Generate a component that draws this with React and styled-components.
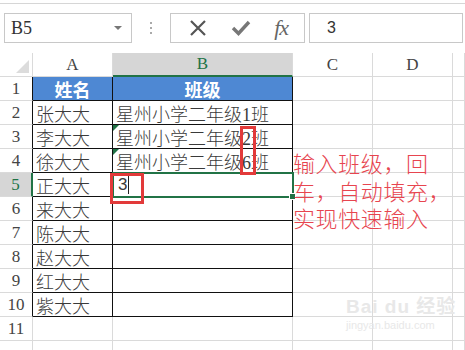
import React from "react";
import styled, { createGlobalStyle } from "styled-components";

const Global = createGlobalStyle`
  html, body { margin: 0; padding: 0; background: #fff; }
  body { width: 465px; height: 350px; overflow: hidden; }
`;

const SERIF = `"Liberation Serif", "Noto Sans CJK SC", serif`;
const SANS = `"Liberation Sans", "Noto Sans CJK SC", sans-serif`;
const GREEN = "#217346";
const GRID = "#dadada";

const Page = styled.div`
  width: 465px;
  height: 350px;
  overflow: hidden;
  padding-top: 3px;
  box-sizing: border-box;
`;

const FormulaBar = styled.div`
  display: flex;
  align-items: center;
  height: 50px;
  border-top: 1px solid #d6d6d6;
  padding: 9px 2px 10px 4px;
  box-sizing: border-box;
`;

const NameBox = styled.div`
  width: 128px;
  height: 30px;
  box-sizing: border-box;
  border: 1px solid #c8c8c8;
  display: flex;
  align-items: center;
  justify-content: space-between;
  padding: 0 9px 0 6px;
  font-family: ${SERIF};
  font-size: 18px;
  color: #333;
`;

const Caret = styled.span`
  width: 0;
  height: 0;
  border-left: 4px solid transparent;
  border-right: 4px solid transparent;
  border-top: 4px solid #777;
`;

const Dots = styled.div`
  width: 38px;
  display: flex;
  flex-direction: column;
  align-items: center;
  gap: 3px;
`;

const Dot = styled.span`
  width: 2px;
  height: 2px;
  background: #aaa;
`;

const FxBox = styled.div`
  width: 135px;
  height: 30px;
  box-sizing: border-box;
  border: 1px solid #c8c8c8;
  display: flex;
  align-items: center;
  justify-content: space-around;
  padding: 0 4px 0 6px;
`;

const Fx = styled.span`
  font-family: ${SERIF};
  font-style: italic;
  font-size: 22px;
  color: #666;
  letter-spacing: -1px;
`;

const FormulaInput = styled.div`
  flex: 1;
  margin-left: 4px;
  height: 30px;
  box-sizing: border-box;
  border: 1px solid #c8c8c8;
  display: flex;
  align-items: center;
  padding-left: 17px;
  font-family: ${SANS};
  font-size: 16px;
  color: #333;
`;

const Sheet = styled.div`
  position: relative;
  display: grid;
  grid-template-columns: 33px 80px 180px 80px 80px 1fr;
  grid-auto-rows: 24px;
`;

const Cell = styled.div`
  position: relative;
  box-sizing: border-box;
  border-right: 1px solid ${(p) => (p.$br ? "#111" : GRID)};
  border-bottom: 1px solid ${(p) => (p.$bb ? "#111" : GRID)};
  background: ${(p) => p.$bg || "#fff"};
  color: ${(p) => p.$color || "#3a3a3a"};
  font-family: ${SERIF};
  font-size: 18px;
  font-weight: ${(p) => (p.$bold ? 700 : 300)};
  display: flex;
  align-items: center;
  justify-content: ${(p) => (p.$center ? "center" : "flex-start")};
  padding-left: ${(p) => (p.$center ? 0 : 3)}px;
  white-space: nowrap;
  overflow: visible;
  &::before {
    content: "";
    display: ${(p) => (p.$tri ? "block" : "none")};
    position: absolute;
    left: 0;
    top: 0;
    border-top: 6px solid ${GREEN};
    border-right: 6px solid transparent;
  }
`;

const Head = styled.div`
  box-sizing: border-box;
  background: ${(p) => (p.$sel ? "#d6d6d6" : "#fff")};
  color: ${(p) => (p.$sel ? GREEN : "#444")};
  border-right: ${(p) => (p.$rsel ? `2px solid ${GREEN}` : `1px solid ${p.$rblack ? "#111" : GRID}`)};
  border-bottom: ${(p) => (p.$bsel ? `2px solid ${GREEN}` : `1px solid ${GRID}`)};
  font-family: ${SERIF};
  font-size: 17px;
  display: flex;
  align-items: center;
  justify-content: center;
`;

const Corner = styled(Head)`
  position: relative;
  &::after {
    content: "";
    position: absolute;
    right: 3px;
    bottom: 3px;
    border-bottom: 13px solid #dcdcdc;
    border-left: 13px solid transparent;
  }
`;

const Active = styled(Cell)`
  z-index: 2;
  outline: 2px solid ${GREEN};
  outline-offset: -1px;
  font-family: ${SANS};
  font-size: 17px;
  font-weight: 400;
  padding-left: 5px;
  &::after {
    content: "";
    position: absolute;
    right: -4px;
    bottom: -4px;
    width: 5px;
    height: 5px;
    background: ${GREEN};
    border: 1px solid #fff;
  }
`;

const Cursor = styled.span`
  width: 1px;
  height: 18px;
  background: #222;
  margin-left: 1px;
`;

const RedBox = styled.div`
  position: absolute;
  box-sizing: border-box;
  border: 3px solid #e23a3a;
  z-index: 3;
`;

const Note = styled.div`
  position: absolute;
  left: 293px;
  top: 96px;
  z-index: 3;
  font-family: "Noto Sans CJK SC", sans-serif;
  font-weight: 300;
  font-size: 22px;
  line-height: 27.5px;
  letter-spacing: 0.6px;
  color: #e7454f;
`;

const Watermark = styled.div`
  position: absolute;
  left: 346px;
  top: 238px;
  z-index: 1;
  color: #e8e8e8;
  font-family: ${SANS};
  display: flex;
  flex-direction: column;
  align-items: flex-start;
`;

const WmTop = styled.span`
  font-size: 19px;
  font-weight: 700;
  letter-spacing: 1px;
`;

const WmBottom = styled.span`
  font-size: 11px;
  margin-top: 1px;
`;

const names = ["张大大", "李大大", "徐大大", "正大大", "来大大", "陈大大", "赵大大", "红大大", "紫大大"];
const classes = ["星州小学二年级1班", "星州小学二年级2班", "星州小学二年级6班"];
const cols = ["A", "B", "C", "D", ""];

export default function App() {
  const rows = [];
  for (let r = 1; r <= 12; r++) {
    const inTable = r <= 10;
    rows.push(
      <Head key={`h${r}`} $sel={r === 5} $rsel={r === 5} $rblack={inTable}>
        {r <= 11 ? r : ""}
      </Head>
    );
    if (r === 1) {
      rows.push(
        <Cell key="a1" $br $bb $bg="#4e88d3" $color="#fff" $bold $center>姓名</Cell>,
        <Cell key="b1" $br $bb $bg="#4e88d3" $color="#fff" $bold $center>班级</Cell>
      );
    } else {
      rows.push(
        <Cell key={`a${r}`} $br={inTable} $bb={inTable}>{inTable ? names[r - 2] : ""}</Cell>
      );
      if (r === 5) {
        rows.push(
          <Active key="b5" $br $bb>3<Cursor /></Active>
        );
      } else {
        rows.push(
          <Cell key={`b${r}`} $br={inTable} $bb={inTable} $tri={r === 3 || r === 4}>
            {r <= 4 ? classes[r - 2] : ""}
          </Cell>
        );
      }
    }
    rows.push(
      <Cell key={`c${r}`} />,
      <Cell key={`d${r}`} />,
      <Cell key={`e${r}`} />
    );
  }

  return (
    <Page>
      <Global />
      <FormulaBar>
        <NameBox>
          <span>B5</span>
          <Caret />
        </NameBox>
        <Dots>
          <Dot />
          <Dot />
          <Dot />
        </Dots>
        <FxBox>
          <svg width="18" height="18" viewBox="0 0 18 18">
            <path d="M2 2 L16 16 M16 2 L2 16" stroke="#555" strokeWidth="2.2" fill="none" />
          </svg>
          <svg width="20" height="18" viewBox="0 0 20 18">
            <path d="M2 9 L7.5 14.5 L18 3" stroke="#777" strokeWidth="3.4" fill="none" />
          </svg>
          <Fx>fx</Fx>
        </FxBox>
        <FormulaInput>3</FormulaInput>
      </FormulaBar>
      <Sheet>
        <Corner />
        {cols.map((c) => (
          <Head key={c || "e"} $sel={c === "B"} $bsel={c === "B"}>{c}</Head>
        ))}
        {rows}
        <RedBox style={{ left: 240, top: 73, width: 16, height: 49 }} />
        <RedBox style={{ left: 110, top: 120, width: 34, height: 31 }} />
        <Note>
          输入班级，回
          <br />
          车，自动填充，
          <br />
          实现快速输入
        </Note>
        <Watermark>
          <WmTop>Bai du 经验</WmTop>
          <WmBottom>jingyan.baidu.com</WmBottom>
        </Watermark>
      </Sheet>
    </Page>
  );
}
